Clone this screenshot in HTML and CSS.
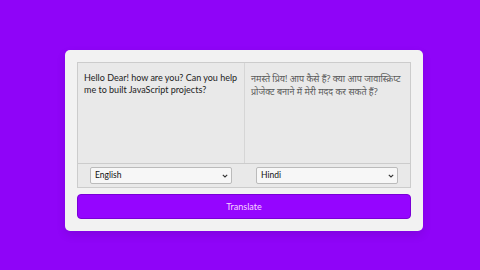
FILE: index.html
```html
<!DOCTYPE html>
<html>
<head>
    <title>Language Translator</title>
    <meta name="viewport" content="width=device-width, initial-scale=1.0">
    <link rel="stylesheet" href="styles.css">
</head>
<body>
    <div class="container">
        <div class="wrapper">
            <div class="text-input">
                <textarea class="from-text" spellcheck="false">Hello Dear! how are you? Can you help me to built JavaScript projects?</textarea>
                <textarea class="to-text" spellcheck="false" readonly>नमस्ते प्रिय! आप कैसे हैं? क्या आप जावास्क्रिप्ट प्रोजेक्ट बनाने में मेरी मदद कर सकते हैं?</textarea>
            </div>
            <ul class="controls">
                <li class="row">
                    <select>
                        <option>English</option>
                    </select>
                    <svg class="arrow" width="6" height="4" viewBox="0 0 6 4"><path d="M0.8 0.8 L3 3 L5.2 0.8" fill="none" stroke="#333" stroke-width="1.1"/></svg>
                </li>
                <li class="row">
                    <select>
                        <option>Hindi</option>
                    </select>
                    <svg class="arrow" width="6" height="4" viewBox="0 0 6 4"><path d="M0.8 0.8 L3 3 L5.2 0.8" fill="none" stroke="#333" stroke-width="1.1"/></svg>
                </li>
            </ul>
        </div>
        <button>Translate</button>
    </div>
</body>
</html>
```

FILE: styles.css
```css
* {
    margin: 0;
    padding: 0;
    box-sizing: border-box;
    font-family: "Lato", "Open Sans", sans-serif;
}
body {
    background: #8f04f8;
    min-height: 100vh;
    display: flex;
    justify-content: center;
    align-items: center;
    padding: 10px 0 0 8px;
}
.container {
    width: 358px;
    background: #f2f2f2;
    border-radius: 5px;
    padding: 12px;
    box-shadow: 0 4px 10px rgba(0,0,0,0.1);
}
.wrapper {
    border: 1px solid #ccc;
    background: #e9e9e9;
}
.text-input {
    display: flex;
    border-bottom: 1px solid #ccc;
}
.text-input textarea {
    width: 50%;
    height: 100px;
    border: none;
    outline: none;
    resize: none;
    background: none;
    font-size: 9px;
    line-height: 12.5px;
    padding: 9px 6px;
    color: #222;
}
.text-input .to-text {
    border-left: 1px solid #d6d6d6;
    color: #5a5a5a;
    font-family: "Noto Sans", sans-serif;
    font-size: 9px;
    line-height: 13px;
    padding-right: 3px;
}
.controls {
    list-style: none;
    display: flex;
    height: 23px;
    align-items: center;
    padding: 0 12px;
    gap: 24px;
}
.controls .row {
    flex: 1;
    position: relative;
    display: flex;
}
.controls select {
    width: 142px;
    height: 17px;
    font-size: 8.5px;
    border: 1px solid #bbb;
    border-radius: 2px;
    background: #f7f7f7;
    color: #111;
    padding: 0 4px;
    appearance: none;
    -webkit-appearance: none;
    outline: none;
}
.controls .arrow {
    position: absolute;
    right: 4px;
    top: 7px;
    pointer-events: none;
}
button {
    width: 100%;
    height: 25px;
    margin-top: 6px;
    border: 1px solid #7a00d6;
    border-radius: 4px;
    background: #9505ff;
    color: #f8d6ff;
    font-size: 9px;
    cursor: pointer;
}
```
